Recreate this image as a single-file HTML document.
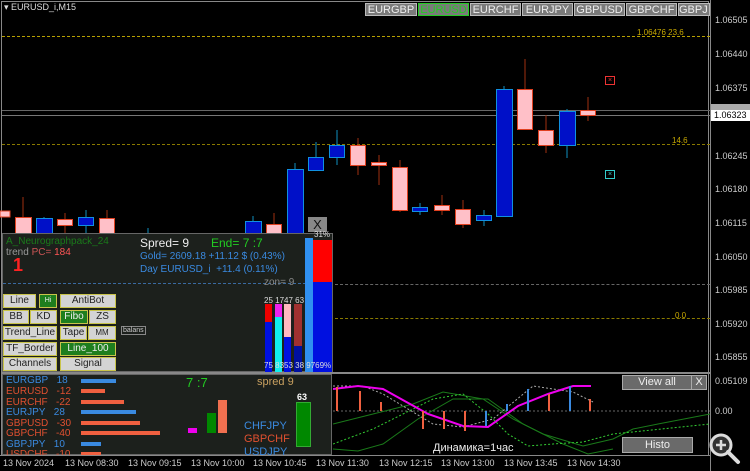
<!DOCTYPE html><html><head><meta charset="utf-8"><style>
body{margin:0;background:#000;width:750px;height:471px;overflow:hidden;position:relative;font-family:"Liberation Sans",sans-serif;}
.a{position:absolute;}
.c{position:absolute;box-sizing:border-box;}
.ax{position:absolute;left:715px;color:#ccc;font-size:9px;}
.tab{position:absolute;top:3px;height:13px;background:#7a7a7a;border:1px solid #bbb;color:#eee;font-size:11px;line-height:13px;text-align:center;box-sizing:border-box;}
.btn{position:absolute;background:#d4d4d4;border:1px solid #c9c44a;color:#222;font-size:10px;text-align:center;line-height:12px;box-sizing:border-box;height:14px;}
.g{background:#1e7e1e;color:#eee;}
.t{position:absolute;font-size:10px;white-space:nowrap;}
</style></head><body>
<div class="a" style="left:1px;top:1px;width:708px;height:454px;border:1px solid #888;border-bottom:none;box-sizing:border-box"></div>
<div class="a" style="left:710px;top:0;width:1px;height:471px;background:#888"></div>
<div class="t" style="left:4px;top:2px;color:#ddd;font-size:9px">▾ EURUSD_i,M15</div>
<div class="tab" style="left:365px;width:52px">EURGBP</div>
<div class="tab" style="left:418px;width:51px;color:#2c2;border-color:#2c2">EURUSD</div>
<div class="tab" style="left:470px;width:51px">EURCHF</div>
<div class="tab" style="left:522px;width:51px">EURJPY</div>
<div class="tab" style="left:574px;width:51px">GBPUSD</div>
<div class="tab" style="left:626px;width:51px">GBPCHF</div>
<div class="tab" style="left:678px;width:32px;text-align:left">GBPJ</div>
<div class="a" style="left:2px;top:36px;width:708px;border-top:1px dashed #b8a000"></div>
<div class="a" style="left:2px;top:144px;width:708px;border-top:1px dashed #8a7a00"></div>
<div class="a" style="left:2px;top:110px;width:708px;height:1px;background:#666"></div>
<div class="a" style="left:2px;top:115px;width:708px;height:1px;background:#777"></div>
<div class="a" style="left:335px;top:284px;width:375px;border-top:1px dashed #666"></div>
<div class="a" style="left:335px;top:318px;width:375px;border-top:1px dashed #8a7a00"></div>
<div class="t" style="left:637px;top:28px;color:#c8a800;font-size:8px">1.06476 23.6</div>
<div class="t" style="left:672px;top:136px;color:#c8a800;font-size:8px">14.6</div>
<div class="t" style="left:675px;top:311px;color:#c8a800;font-size:8px">0.0</div>
<div class="t" style="left:605px;top:76px;width:8px;height:7px;border:1px solid #e33;color:#e33;font-size:7px;line-height:7px;text-align:center">×</div>
<div class="t" style="left:605px;top:170px;width:8px;height:7px;border:1px solid #3cc;color:#3cc;font-size:7px;line-height:7px;text-align:center">×</div>
<svg class="a" style="left:0;top:0" width="710" height="240">
<g stroke-width="1">
<g stroke="#a03010"><line x1="23" y1="197" x2="23" y2="240"/><line x1="65" y1="213" x2="65" y2="233"/><line x1="107" y1="210" x2="107" y2="240"/><line x1="274" y1="213" x2="274" y2="233"/><line x1="358" y1="138" x2="358" y2="175"/><line x1="379" y1="155" x2="379" y2="185"/><line x1="400" y1="160" x2="400" y2="212"/><line x1="442" y1="195" x2="442" y2="215"/><line x1="463" y1="200" x2="463" y2="228"/><line x1="525" y1="59" x2="525" y2="130"/><line x1="546" y1="115" x2="546" y2="153"/><line x1="588" y1="97" x2="588" y2="121"/></g>
<g stroke="#1090c0"><line x1="44" y1="217" x2="44" y2="240"/><line x1="86" y1="210" x2="86" y2="240"/><line x1="148" y1="228" x2="148" y2="240"/><line x1="253" y1="216" x2="253" y2="233"/><line x1="295" y1="163" x2="295" y2="233"/><line x1="316" y1="142" x2="316" y2="171"/><line x1="337" y1="130" x2="337" y2="165"/><line x1="420" y1="203" x2="420" y2="215"/><line x1="484" y1="210" x2="484" y2="226"/><line x1="504" y1="86" x2="504" y2="216"/><line x1="567" y1="109" x2="567" y2="158"/></g>
</g>
<g fill="#ffc0c8" stroke="#e04020"><rect x="0" y="211" width="10" height="6"/><rect x="15.5" y="217.5" width="16" height="16"/><rect x="57.5" y="219.5" width="15" height="6"/><rect x="99.5" y="218.5" width="15" height="16"/><rect x="266.5" y="224.5" width="15" height="10"/><rect x="350.5" y="145.5" width="15" height="20"/><rect x="371.5" y="162.5" width="15" height="3"/><rect x="392.5" y="167.5" width="15" height="43"/><rect x="434.5" y="205.5" width="15" height="5"/><rect x="455.5" y="209.5" width="15" height="15"/><rect x="517.5" y="89.5" width="15" height="40"/><rect x="538.5" y="130.5" width="15" height="15"/><rect x="580.5" y="110.5" width="15" height="5"/></g>
<g fill="#0010c8" stroke="#1090e0"><rect x="36.5" y="218.5" width="16" height="16"/><rect x="78.5" y="217.5" width="15" height="8"/><rect x="245.5" y="221.5" width="16" height="13"/><rect x="287.5" y="169.5" width="16" height="66"/><rect x="308.5" y="157.5" width="15" height="13"/><rect x="329.5" y="145.5" width="15" height="12"/><rect x="412.5" y="207.5" width="15" height="4"/><rect x="476.5" y="215.5" width="15" height="5"/><rect x="496.5" y="89.5" width="16" height="127"/><rect x="559.5" y="111.5" width="16" height="34"/></g>
</svg>
<div class="ax" style="top:15px">1.06505</div><div class="ax" style="top:49px">1.06440</div><div class="ax" style="top:83px">1.06375</div>
<div class="a" style="left:711px;top:104px;width:39px;height:10px;background:#aaa"></div>
<div class="a" style="left:711px;top:110px;width:36px;height:11px;background:#fff;color:#000;font-size:9px;line-height:11px;padding-left:3px">1.06323</div>
<div class="ax" style="top:151px">1.06245</div><div class="ax" style="top:184px">1.06180</div><div class="ax" style="top:218px">1.06115</div><div class="ax" style="top:252px">1.06050</div><div class="ax" style="top:285px">1.05985</div><div class="ax" style="top:319px">1.05920</div><div class="ax" style="top:352px">1.05855</div>
<div class="ax" style="top:376px">0.05109</div><div class="ax" style="top:406px">0.00</div>
<!-- top-left panel -->
<div class="c" style="left:308px;top:217px;width:19px;height:15px;background:#888;color:#111;font-size:13px;text-align:center;line-height:15px">X</div>
<div class="c" style="left:2px;top:233px;width:331px;height:139px;background:#1c201c;border:1px solid #666"></div>
<div class="t" style="left:6px;top:236px;color:#1a7a1a">A_Neurographpack_24</div>
<div class="t" style="left:6px;top:247px;color:#999">trend <span style="color:#c55">PC=</span> <span style="color:#f55">184</span></div>
<div class="t" style="left:13px;top:255px;color:#f22;font-size:18px;font-weight:bold">1</div>
<div class="t" style="left:140px;top:236px;color:#eee;font-size:12px">Spred= 9</div>
<div class="t" style="left:211px;top:236px;color:#2c2;font-size:12px">End= 7 :7</div>
<div class="t" style="left:140px;top:251px;color:#3a8ae0">Gold= 2609.18 +11.12 $ (0.43%)</div>
<div class="t" style="left:140px;top:264px;color:#3a8ae0">Day EURUSD_i &nbsp;+11.4 (0.11%)</div>
<div class="a" style="left:3px;top:283px;width:303px;border-top:1px dashed #3a6aa0"></div>
<div class="t" style="left:264px;top:277px;color:#888">zon= 9</div>
<div class="btn" style="left:3px;top:294px;width:33px">Line</div>
<div class="btn g" style="left:39px;top:294px;width:18px;font-size:7px">Hi</div>
<div class="btn" style="left:60px;top:294px;width:56px">AntiBot</div>
<div class="btn" style="left:3px;top:310px;width:26px">BB</div>
<div class="btn" style="left:30px;top:310px;width:27px">KD</div>
<div class="btn g" style="left:60px;top:310px;width:28px">Fibo</div>
<div class="btn" style="left:89px;top:310px;width:27px">ZS</div>
<div class="btn" style="left:3px;top:326px;width:54px">Trend_Line</div>
<div class="btn" style="left:60px;top:326px;width:27px">Tape</div>
<div class="btn" style="left:88px;top:326px;width:28px;font-size:8px">MM</div>
<div class="t" style="left:121px;top:326px;color:#ccc;font-size:7px;border:1px solid #888;padding:0 1px">balans</div>
<div class="btn" style="left:3px;top:342px;width:54px">TF_Border</div>
<div class="btn g" style="left:60px;top:342px;width:56px">Line_100</div>
<div class="btn" style="left:3px;top:357px;width:54px">Channels</div>
<div class="btn" style="left:60px;top:357px;width:56px">Signal</div>
<!-- bars -->
<div class="a" style="left:265px;top:304px;width:7px;height:68px;background:#0010e0"></div><div class="a" style="left:265px;top:304px;width:7px;height:18px;background:#e00"></div>
<div class="a" style="left:275px;top:304px;width:7px;height:68px;background:#1ee"></div><div class="a" style="left:275px;top:304px;width:7px;height:13px;background:#e2e"></div>
<div class="a" style="left:284px;top:304px;width:7px;height:68px;background:#0010e0"></div><div class="a" style="left:284px;top:304px;width:7px;height:33px;background:#ffb8c0"></div>
<div class="a" style="left:294px;top:304px;width:8px;height:68px;background:#0010a0"></div><div class="a" style="left:294px;top:304px;width:8px;height:42px;background:#a03030"></div>
<div class="a" style="left:305px;top:238px;width:8px;height:134px;background:#3090f0"></div>
<div class="a" style="left:313px;top:240px;width:19px;height:132px;background:#0010e0"></div><div class="a" style="left:313px;top:240px;width:19px;height:42px;background:#f00"></div>
<div class="t" style="left:264px;top:296px;color:#ddd;font-size:8px">25 1747 63</div>
<div class="t" style="left:314px;top:230px;color:#ddd;font-size:8px">31%</div>
<div class="t" style="left:264px;top:361px;color:#ddd;font-size:8px">75 8353 38 9769%</div>
<!-- bottom-left panel -->
<div class="c" style="left:2px;top:374px;width:330px;height:81px;background:#1c201c;border:1px solid #666"></div>
<div class="t" style="left:6px;top:376px;color:#3a8ae0;line-height:10.5px">EURGBP&nbsp;&nbsp; 18</div>
<div class="t" style="left:6px;top:386px;color:#e05030">EURUSD&nbsp;&nbsp; -12</div>
<div class="t" style="left:6px;top:397px;color:#e05030">EURCHF&nbsp;&nbsp; -22</div>
<div class="t" style="left:6px;top:407px;color:#3a8ae0">EURJPY&nbsp;&nbsp; 28</div>
<div class="t" style="left:6px;top:418px;color:#e05030">GBPUSD&nbsp;&nbsp; -30</div>
<div class="t" style="left:6px;top:428px;color:#e05030">GBPCHF&nbsp;&nbsp; -40</div>
<div class="t" style="left:6px;top:439px;color:#3a8ae0">GBPJPY&nbsp;&nbsp; 10</div>
<div class="t" style="left:6px;top:449px;color:#e05030;height:6px;overflow:hidden">USDCHF&nbsp;&nbsp; -10</div>
<div class="a" style="left:81px;top:379px;width:35px;height:4px;background:#3a8ae0"></div>
<div class="a" style="left:81px;top:389px;width:24px;height:4px;background:#f06040"></div>
<div class="a" style="left:81px;top:400px;width:43px;height:4px;background:#f06040"></div>
<div class="a" style="left:81px;top:410px;width:55px;height:4px;background:#3a8ae0"></div>
<div class="a" style="left:81px;top:421px;width:59px;height:4px;background:#f06040"></div>
<div class="a" style="left:81px;top:431px;width:79px;height:4px;background:#f06040"></div>
<div class="a" style="left:81px;top:442px;width:20px;height:4px;background:#3a8ae0"></div>
<div class="a" style="left:81px;top:452px;width:20px;height:3px;background:#f06040"></div>
<div class="t" style="left:186px;top:375px;color:#2c2;font-size:13px">7 :7</div>
<div class="t" style="left:257px;top:376px;color:#c8a060;font-size:11px">spred 9</div>
<div class="a" style="left:188px;top:428px;width:9px;height:5px;background:#e0e"></div>
<div class="a" style="left:207px;top:413px;width:9px;height:20px;background:#080"></div>
<div class="a" style="left:218px;top:400px;width:9px;height:33px;background:#f07050"></div>
<div class="t" style="left:297px;top:392px;color:#fff;font-size:9px;font-weight:bold">63</div>
<div class="a" style="left:296px;top:402px;width:13px;height:43px;background:#080;border:1px solid #3a3"></div>
<div class="t" style="left:244px;top:420px;color:#3a8ae0;font-size:11px">CHFJPY</div>
<div class="t" style="left:244px;top:433px;color:#e05030;font-size:11px">GBPCHF</div>
<div class="t" style="left:244px;top:446px;color:#3a8ae0;font-size:11px;height:9px;overflow:hidden">USDJPY</div>
<!-- lower indicator -->
<div class="a" style="left:2px;top:372px;width:708px;height:2px;background:#888"></div>
<svg class="a" style="left:333px;top:374px" width="377" height="81">
<line x1="0" y1="37" x2="377" y2="37" stroke="#666" stroke-dasharray="2,2"/>
<polyline points="0,75 25,77 50,70 85,45 120,25 155,25 190,50 230,70 255,80 280,75" fill="none" stroke="#1a7a1a"/>
<polyline points="0,50 40,40 80,30 110,18 150,25 180,45 210,60 250,72 280,65 300,55 325,50 377,40" fill="none" stroke="#1a7a1a"/>
<polyline points="0,70 40,55 70,40 100,25 130,20 155,40 175,60 195,72 220,70 250,68 280,60 377,50" fill="none" stroke="#3c3" stroke-dasharray="2,2"/>
<polyline points="0,12 30,12 50,20 80,38 100,50 130,53 160,45 200,12 240,18 260,28" fill="none" stroke="#aaa" stroke-dasharray="2,2"/>
<polyline points="0,15 25,12 50,15 95,40 130,52 155,53 185,32 215,20 240,12 258,12" fill="none" stroke="#e0e" stroke-width="2"/>
<g stroke="#f06040" stroke-width="2"><line x1="4" y1="13" x2="4" y2="37"/><line x1="27" y1="17" x2="27" y2="37"/><line x1="48" y1="28" x2="48" y2="37"/><line x1="90" y1="37" x2="90" y2="55"/><line x1="111" y1="37" x2="111" y2="55"/><line x1="132" y1="37" x2="132" y2="57"/><line x1="216" y1="20" x2="216" y2="37"/><line x1="257" y1="25" x2="257" y2="37"/></g>
<g stroke="#3a8ae0" stroke-width="2"><line x1="153" y1="37" x2="153" y2="52"/><line x1="174" y1="30" x2="174" y2="37"/><line x1="195" y1="15" x2="195" y2="37"/><line x1="237" y1="12" x2="237" y2="37"/></g>
</svg>
<div class="c" style="left:622px;top:375px;width:70px;height:15px;background:#6a6a6a;border:1px solid #aaa;color:#eee;font-size:11px;text-align:center;line-height:13px">View all</div>
<div class="c" style="left:691px;top:375px;width:16px;height:15px;background:#6a6a6a;border:1px solid #aaa;color:#eee;font-size:11px;text-align:center;line-height:13px">X</div>
<div class="c" style="left:622px;top:437px;width:71px;height:16px;background:#6a6a6a;border:1px solid #aaa;color:#eee;font-size:11px;text-align:center;line-height:14px">Histo</div>
<div class="t" style="left:433px;top:442px;color:#eee;font-size:11px">Динамика=1час</div>
<svg class="a" style="left:706px;top:430px" width="36" height="36"><circle cx="15" cy="15" r="10" fill="#333" stroke="#ddd" stroke-width="3"/><line x1="22" y1="22" x2="32" y2="32" stroke="#ddd" stroke-width="4" stroke-linecap="round"/><path d="M10 15h10M15 10v10" stroke="#ddd" stroke-width="2.5"/></svg>
<!-- time axis -->
<div class="a" style="left:0;top:455px;width:710px;height:1px;background:#888"></div>
<div class="t" style="left:3px;top:458px;color:#ccc;font-size:9px;word-spacing:0">13 Nov 2024</div>
<div class="t" style="left:65px;top:458px;color:#ccc;font-size:9px">13 Nov 08:30</div>
<div class="t" style="left:128px;top:458px;color:#ccc;font-size:9px">13 Nov 09:15</div>
<div class="t" style="left:191px;top:458px;color:#ccc;font-size:9px">13 Nov 10:00</div>
<div class="t" style="left:253px;top:458px;color:#ccc;font-size:9px">13 Nov 10:45</div>
<div class="t" style="left:316px;top:458px;color:#ccc;font-size:9px">13 Nov 11:30</div>
<div class="t" style="left:379px;top:458px;color:#ccc;font-size:9px">13 Nov 12:15</div>
<div class="t" style="left:441px;top:458px;color:#ccc;font-size:9px">13 Nov 13:00</div>
<div class="t" style="left:504px;top:458px;color:#ccc;font-size:9px">13 Nov 13:45</div>
<div class="t" style="left:567px;top:458px;color:#ccc;font-size:9px">13 Nov 14:30</div>
</body></html>
